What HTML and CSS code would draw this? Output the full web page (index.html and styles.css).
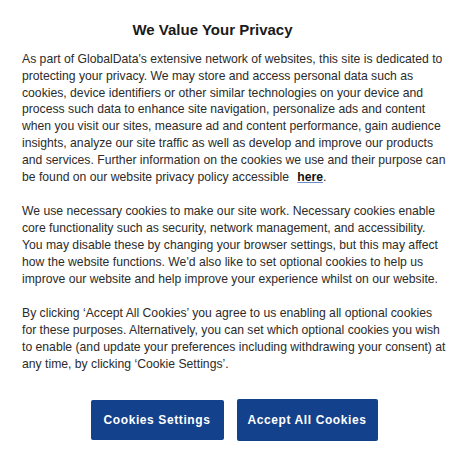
FILE: index.html
```html
<!DOCTYPE html>
<html lang="en">
<head>
<meta charset="utf-8">
<link rel="stylesheet" href="styles.css">
</head>
<body>
<div class="dialog">
  <h2 class="title">We Value Your Privacy</h2>
  <div class="body">
    <p>As part of GlobalData's extensive network of websites, this site is dedicated to protecting your privacy. We may store and access personal data such as cookies, device identifiers or other similar technologies on your device and process such data to enhance site navigation, personalize ads and content when you visit our sites, measure ad and content performance, gain audience insights, analyze our site traffic as well as develop and improve our products and services. Further information on the cookies we use and their purpose can be found on our website privacy policy accessible <a class="link" href="#">here</a>.</p>
    <p>We use necessary cookies to make our site work. Necessary cookies enable core functionality such as security, network management, and accessibility. You may disable these by changing your browser settings, but this may affect how the website functions. We'd also like to set optional cookies to help us improve our website and help improve your experience whilst on our website.</p>
    <p>By clicking ‘Accept All Cookies’ you agree to us enabling all optional cookies for these purposes. Alternatively, you can set which optional cookies you wish to enable (and update your preferences including withdrawing your consent) at any time, by clicking ‘Cookie Settings’.</p>
  </div>
  <div class="actions">
    <button class="btn btn-settings">Cookies Settings</button>
    <button class="btn btn-accept">Accept All Cookies</button>
  </div>
</div>
</body>
</html>
```

FILE: styles.css
```css
html, body {
  margin: 0;
  padding: 0;
  background: #fff;
}
body {
  font-family: "Liberation Sans", Arial, sans-serif;
  color: #2b2b2b;
}
.dialog {
  padding: 20px 25px 0 22px;
}
.title {
  margin: 0;
  padding-right: 43px;
  text-align: center;
  font-size: 15px;
  font-weight: bold;
  color: #1a1a1a;
  line-height: 20px;
}
.body {
  margin-top: 11px;
  font-size: 12.2px;
  line-height: 16.8px;
}
.body p {
  margin: 0 0 18px 0;
}
.body p:last-child {
  margin-bottom: 0;
}
.link {
  margin-left: 5px;
  color: #111;
  font-weight: bold;
  text-decoration: underline;
  text-decoration-color: #6a8cc8;
}
.actions {
  display: flex;
  justify-content: center;
  align-items: center;
  gap: 13px;
  margin-top: 26px;
}
.btn {
  background: #14418b;
  color: #fff;
  border: none;
  border-radius: 2px;
  font-family: "Liberation Sans", Arial, sans-serif;
  font-weight: bold;
  font-size: 12px;
  letter-spacing: 0.6px;
  padding: 0;
}
.btn-settings {
  width: 133px;
  height: 40px;
}
.btn-accept {
  width: 141px;
  height: 42px;
}
```
